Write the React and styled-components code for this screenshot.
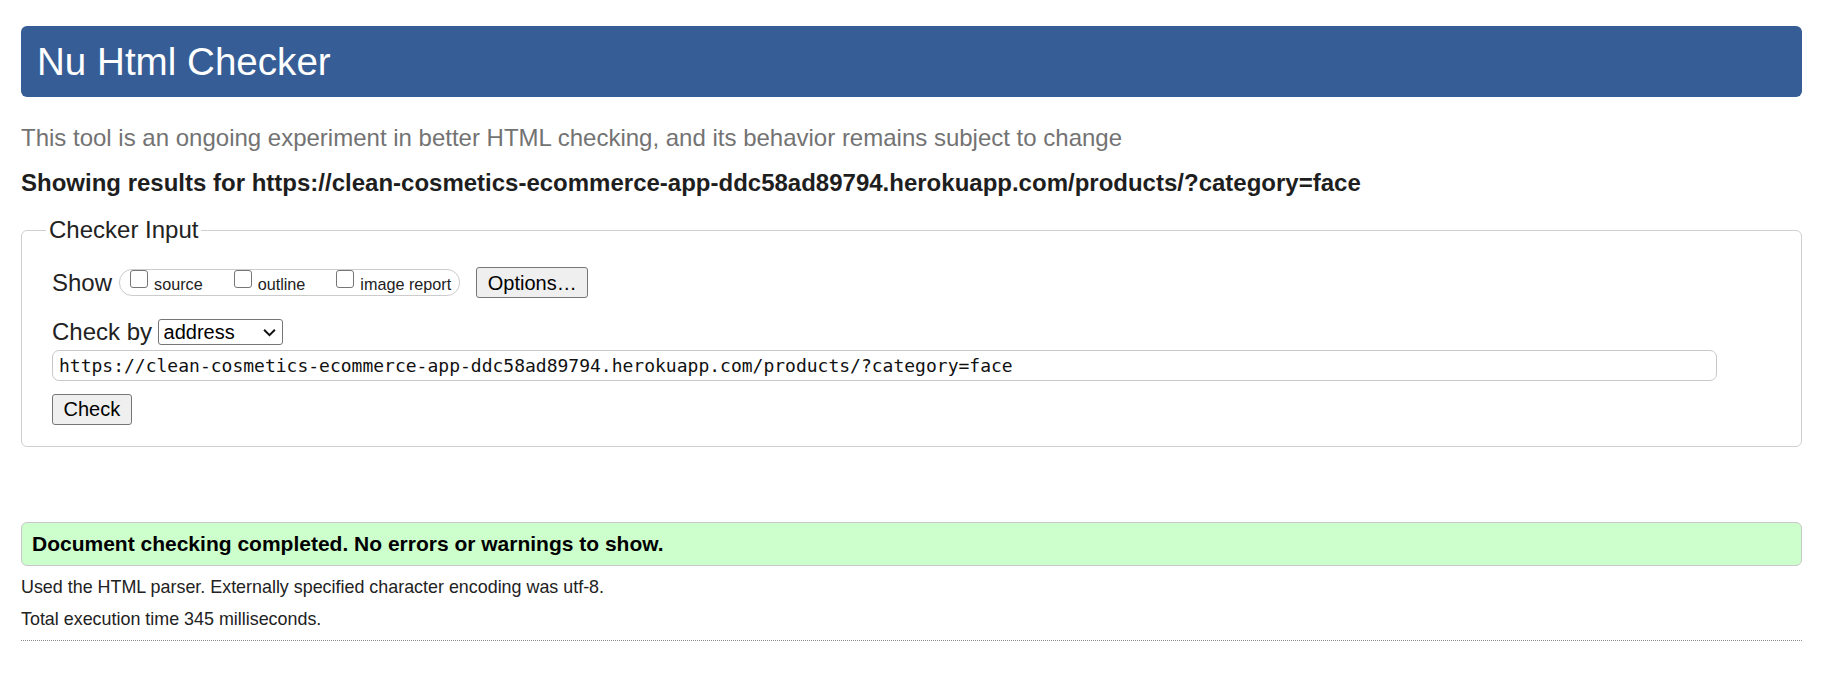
import React from "react";
import styled, { createGlobalStyle } from "styled-components";

const GlobalStyle = createGlobalStyle`
  html, body {
    margin: 0;
    padding: 0;
    background: #fff;
  }

  body {
    font-family: "Liberation Sans", Arial, sans-serif;
    color: #222;
  }
`;

const CHECKED_URL =
  "https://clean-cosmetics-ecommerce-app-ddc58ad89794.herokuapp.com/products/?category=face";

const options = ["source", "outline", "image report"];

export default function App() {
  return (
    <>
      <GlobalStyle />
      <Page>
        <Title>Nu Html Checker</Title>
        <Intro>
          This tool is an ongoing experiment in better HTML checking, and its
          behavior remains subject to change
        </Intro>
        <ResultsFor>Showing results for {CHECKED_URL}</ResultsFor>

        <Fieldset>
          <Legend>Checker Input</Legend>

          <ShowRow>
            <RowLabel>Show</RowLabel>
            <OptionGroup>
              {options.map((name) => (
                <OptionItem key={name}>
                  <Checkbox type="checkbox" />
                  <span>{name}</span>
                </OptionItem>
              ))}
            </OptionGroup>
            <Button type="button" $gap={16}>
              Options…
            </Button>
          </ShowRow>

          <CheckByRow>
            <RowLabel>Check by</RowLabel>
            <SelectWrap>
              <Select defaultValue="address">
                <option value="address">address</option>
                <option value="file">file upload</option>
                <option value="text">text input</option>
              </Select>
              <Chevron viewBox="0 0 16 10" aria-hidden="true">
                <polyline points="2,2 8,8 14,2" />
              </Chevron>
            </SelectWrap>
          </CheckByRow>

          <UrlInput type="url" defaultValue={CHECKED_URL} spellCheck={false} />

          <SubmitRow>
            <Button type="submit">Check</Button>
          </SubmitRow>
        </Fieldset>

        <Success>Document checking completed. No errors or warnings to show.</Success>
        <Note>
          Used the HTML parser. Externally specified character encoding was
          utf-8.
        </Note>
        <Note>Total execution time 345 milliseconds.</Note>
        <DottedRule />
      </Page>
    </>
  );
}

const Page = styled.main`
  padding: 26px 41px 40px 21px;
`;

const Title = styled.h1`
  margin: 0;
  height: 71px;
  padding: 0 16px;
  background: #365d95;
  border-radius: 6px;
  color: #fff;
  font-size: 38.6px;
  font-weight: normal;
  line-height: 71px;
`;

const Intro = styled.p`
  margin: 27px 0 0;
  color: #737373;
  font-size: 24px;
  line-height: 28px;
`;

const ResultsFor = styled.p`
  margin: 17px 0 0;
  color: #1e1e1e;
  font-size: 24px;
  font-weight: bold;
  line-height: 28px;
`;

const Fieldset = styled.fieldset`
  margin: 19px 0 0;
  padding: 23px 30px 21px;
  border: 1px solid #cfcfcf;
  border-radius: 6px;
  min-width: 0;
`;

const Legend = styled.legend`
  margin-left: -6px;
  padding: 0 3px;
  color: #222;
  font-size: 24px;
  line-height: 28px;
`;

const ShowRow = styled.div`
  display: flex;
  align-items: center;
  height: 31px;
`;

const CheckByRow = styled.div`
  display: flex;
  align-items: center;
  height: 28px;
  margin-top: 20px;
`;

const RowLabel = styled.span`
  color: #222;
  font-size: 24px;
  line-height: 28px;
`;

const OptionGroup = styled.div`
  display: flex;
  align-items: stretch;
  gap: 31px;
  height: 27px;
  margin-left: 7px;
  padding: 0 8px 0 10px;
  border: 1px solid #cccccc;
  border-radius: 13px;
  box-sizing: border-box;
`;

const OptionItem = styled.label`
  display: flex;
  align-items: flex-start;
  gap: 6px;
  color: #222;
  font-size: 16.2px;
  line-height: 18px;

  span {
    padding-top: 5px;
  }
`;

const Checkbox = styled.input`
  appearance: none;
  width: 18px;
  height: 18px;
  margin: 0;
  border: 1px solid #767676;
  border-radius: 3px;
  background: #fff;
  box-sizing: border-box;
`;

const Button = styled.button`
  height: 31px;
  margin-left: ${(p) => (p.$gap ? `${p.$gap}px` : "0")};
  padding: 0 10.5px;
  border: 1px solid #767676;
  border-radius: 3px;
  background: #efefef;
  color: #000;
  font-family: "Liberation Sans", Arial, sans-serif;
  font-size: 20px;
  line-height: 1;
`;

const SelectWrap = styled.div`
  position: relative;
  margin-left: 5.5px;
`;

const Select = styled.select`
  appearance: none;
  display: block;
  width: 125px;
  height: 26px;
  padding: 0 0 0 5px;
  border: 1px solid #767676;
  border-radius: 3px;
  background: #fff;
  color: #000;
  font-family: "Liberation Sans", Arial, sans-serif;
  font-size: 20px;
`;

const Chevron = styled.svg`
  position: absolute;
  top: 9px;
  right: 6px;
  width: 15px;
  height: 9px;
  pointer-events: none;
  fill: none;
  stroke: #111;
  stroke-width: 2.2;
`;

const UrlInput = styled.input`
  display: block;
  width: calc(100% - 54px);
  height: 31px;
  margin: 3.5px 0 0;
  padding: 0 6px;
  border: 1px solid #c8c8c8;
  border-radius: 7px;
  box-sizing: border-box;
  color: #111;
  font-family: "DejaVu Sans Mono", "Liberation Mono", monospace;
  font-size: 18px;
`;

const SubmitRow = styled.div`
  margin-top: 13px;
`;

const Success = styled.p`
  margin: 75px 0 0;
  padding: 9px 10px 9px;
  border: 1px solid #c8c8c8;
  border-radius: 6px;
  background: #ccffcc;
  color: #000;
  font-size: 21px;
  font-weight: bold;
  line-height: 24px;
`;

const Note = styled.p`
  margin: 11px 0 0;
  color: #222;
  font-size: 17.9px;
  line-height: 21px;
`;

const DottedRule = styled.hr`
  margin: 10px 0 0;
  border: 0;
  border-top: 1px dotted #8a8a8a;
`;
